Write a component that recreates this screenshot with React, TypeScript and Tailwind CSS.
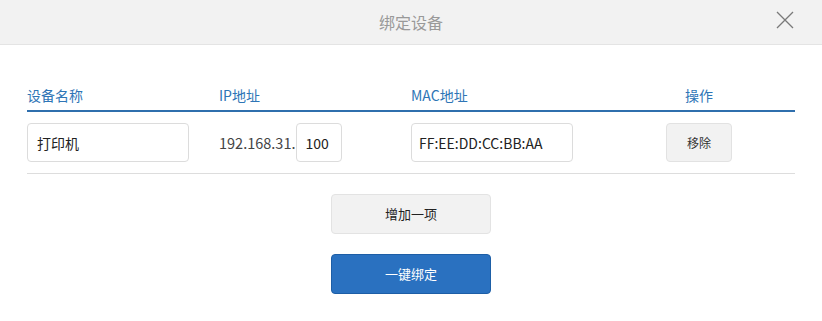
const font = { fontFamily: '"Microsoft YaHei", "Noto Sans CJK SC", "Noto Sans", sans-serif' };

export default function App() {
  return (
    <div className="w-[822px] h-[321px] bg-white overflow-hidden" style={font}>
      {/* Title bar */}
      <div className="relative h-[45px] bg-[#f2f2f2] border-b border-[#e4e4e4] flex items-center justify-center">
        <span className="text-[16px] text-[#999999]">绑定设备</span>
        <button className="absolute left-[776px] top-[11px] text-[#7a7a7a]">
          <svg width="18" height="18" viewBox="0 0 18 18" fill="none" stroke="currentColor" strokeWidth="1.3">
            <path d="M1 1 L17 17 M17 1 L1 17" />
          </svg>
        </button>
      </div>

      <div className="px-[27px] pt-[35px]">
        {/* Table head */}
        <div className="grid grid-cols-4 h-[32px] items-center border-b-2 border-[#2f6fad] text-[14px] text-[#2e75b6]">
          <div>设备名称</div>
          <div>IP地址</div>
          <div>MAC地址</div>
          <div className="text-center">操作</div>
        </div>

        {/* Row */}
        <div className="grid grid-cols-4 items-center py-[11px] border-b border-[#dddddd] text-[14px] text-[#333333]">
          <div>
            <input
              defaultValue="打印机"
              className="w-[162px] h-[39px] px-[9px] border border-[#dcdcdc] rounded-[4px] outline-none text-[#222]"
            />
          </div>
          <div className="flex items-center">
            <span className="text-[14.5px] text-[#444]">192.168.31.</span>
            <input
              defaultValue="100"
              className="w-[46px] h-[39px] px-[8px] ml-px border border-[#dcdcdc] rounded-[4px] outline-none text-[#222]"
            />
          </div>
          <div>
            <input
              defaultValue="FF:EE:DD:CC:BB:AA"
              className="w-[162px] h-[39px] px-[7px] border border-[#dcdcdc] rounded-[4px] outline-none text-[#222]"
            />
          </div>
          <div className="flex justify-center">
            <button className="w-[66px] h-[39px] bg-[#f2f2f2] border border-[#e2e2e2] rounded-[4px] text-[12px] text-[#333]">
              移除
            </button>
          </div>
        </div>

        {/* Actions */}
        <div className="flex flex-col items-center gap-[20px] mt-[20px]">
          <button className="w-[160px] h-[40px] bg-[#f2f2f2] border border-[#e3e3e3] rounded-[4px] text-[13px] text-[#222]">
            增加一项
          </button>
          <button className="w-[160px] h-[40px] bg-[#2a71c0] border border-[#1d5ea6] rounded-[4px] text-[13px] text-white">
            一键绑定
          </button>
        </div>
      </div>
    </div>
  );
}
